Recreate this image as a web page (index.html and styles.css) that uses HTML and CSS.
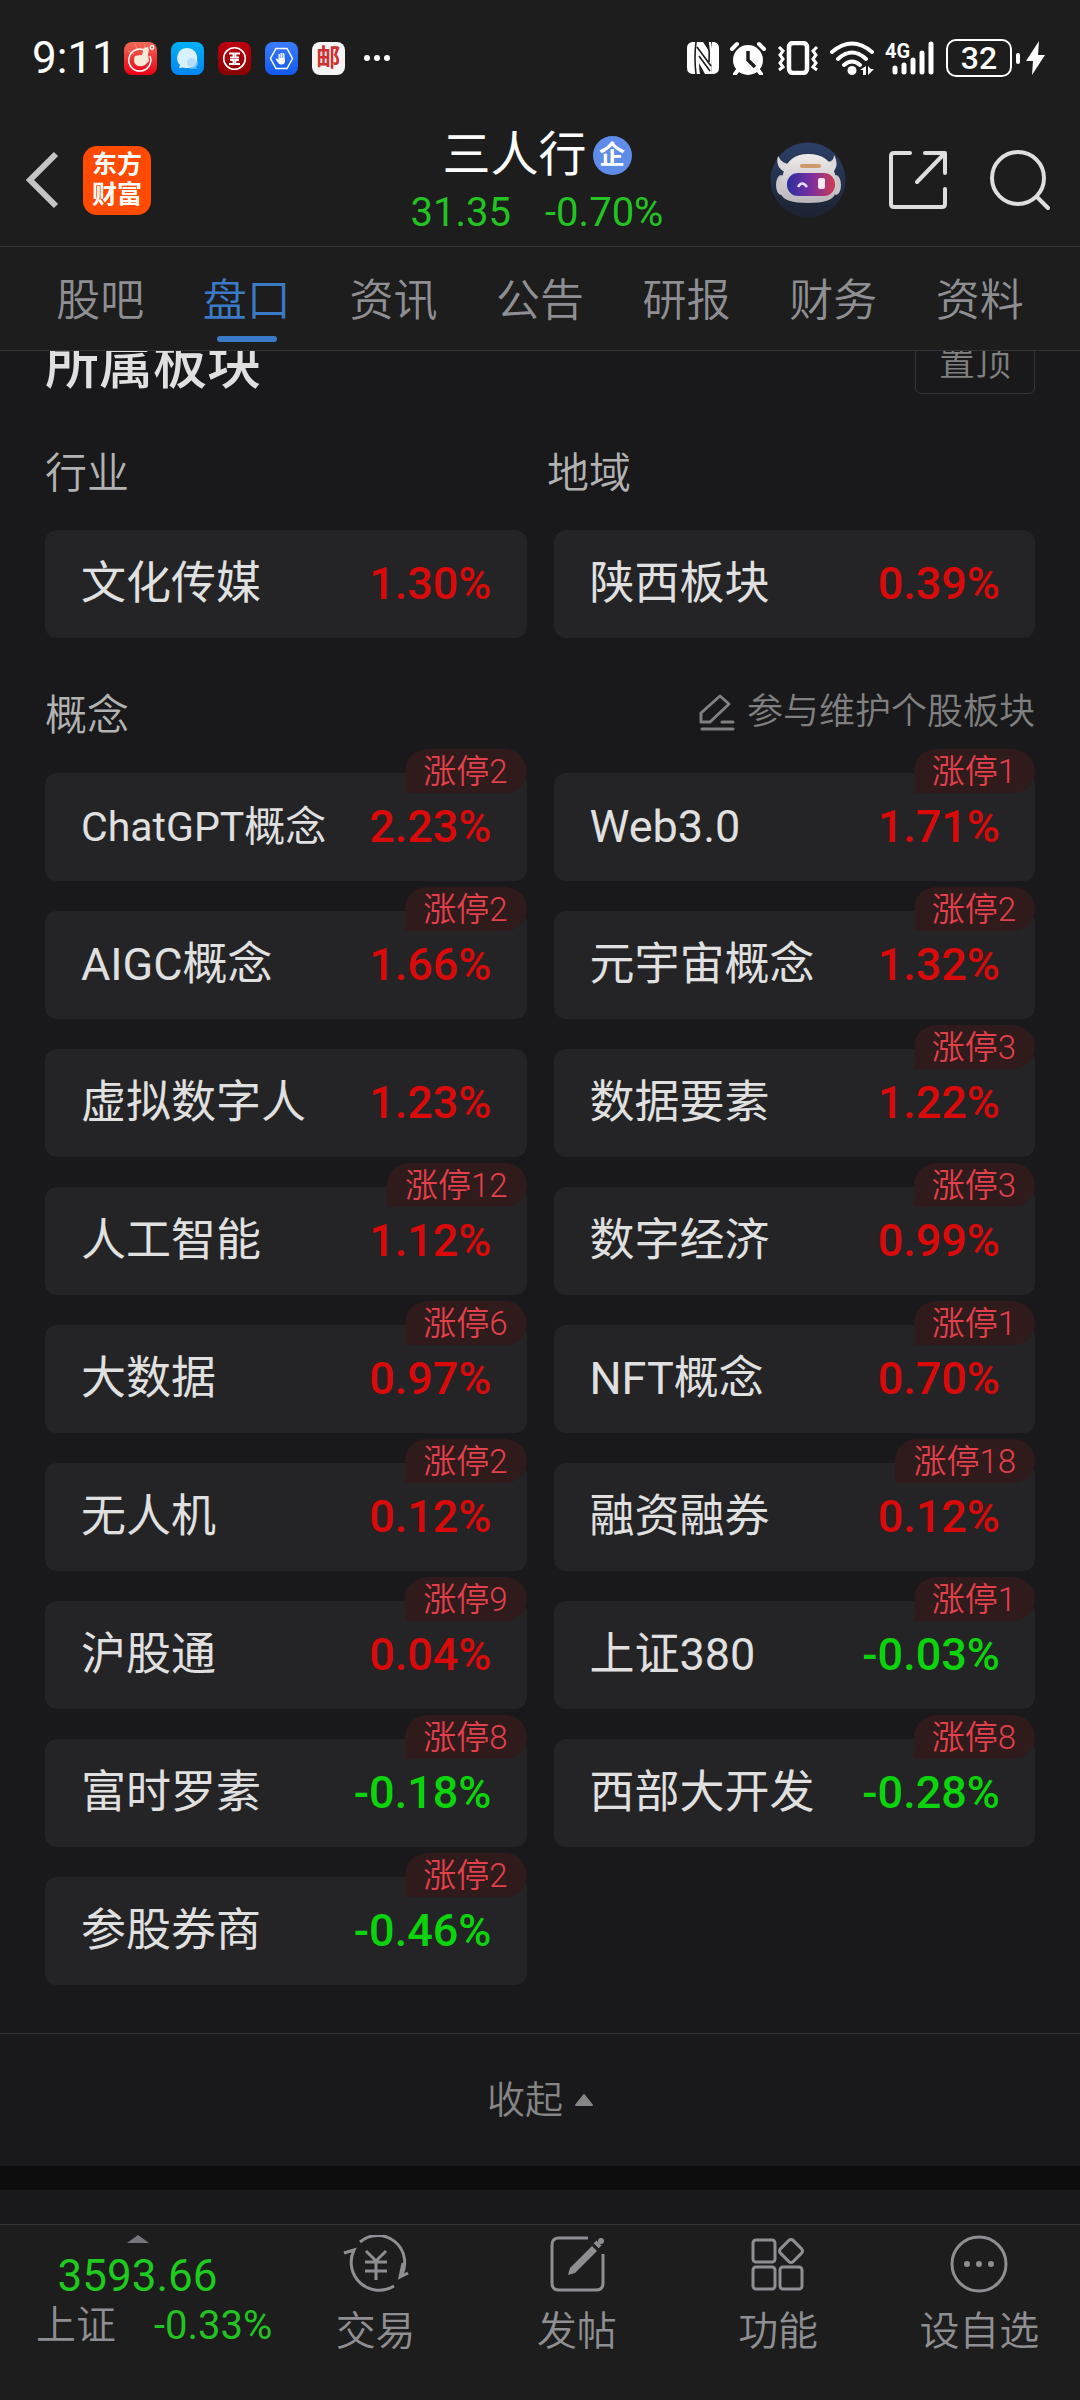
FILE: index.html
```html
<!DOCTYPE html>
<html lang="zh-CN">
<head>
<meta charset="utf-8">
<meta name="viewport" content="width=device-width, initial-scale=1">
<title>三人行 31.35 -0.70%</title>
<link rel="stylesheet" href="styles.css">
</head>
<body>
<div class="status">
  <div class="status-left">
    <span class="clock">9:11</span>
    <svg class="app" viewBox="0 0 33 33"><defs><linearGradient id="g1" x1="0" y1="0" x2="0" y2="1"><stop offset="0" stop-color="#ee6a58"/><stop offset="1" stop-color="#ee0014"/></linearGradient></defs><rect width="33" height="33" rx="8" fill="url(#g1)"/><path d="M4 9l6 3M11 2l2 5M21 2l-1 5" stroke="#f58e7c"/><path d="M22 9A11 11 0 1 0 26 14" fill="none" stroke="#fff" stroke-width="1.5"/><path d="M20 6l4-1 1 3-1 4 1 7-4 4q-6 3-10-1-2-4 0-8 4-1 7-1 1-4 2-7z" fill="#f6ead8"/><circle cx="28" cy="5.500" r="1.800" fill="none" stroke="#fff" stroke-width="1.300"/></svg>
    <svg class="app" viewBox="0 0 33 33"><defs><linearGradient id="g2" x1="0" y1="0" x2="0" y2="1"><stop offset="0" stop-color="#00b0f6"/><stop offset="1" stop-color="#0584f2"/></linearGradient></defs><rect width="33" height="33" rx="8" fill="url(#g2)"/><circle cx="21" cy="21" r="6" fill="#6cc0fb"/><path d="M24 25l3 2-5-1z" fill="#6cc0fb"/><path d="M15.500 6a10.500 10 0 1 1-3 19.500L8 26l1-3A10 10 0 0 1 15.500 6z" fill="#d8f0fd"/><circle cx="20.500" cy="20.500" r="4.500" fill="#b4ddfa"/></svg>
    <svg class="app" viewBox="0 0 33 33"><defs><linearGradient id="g3" x1="0" y1="0" x2="0" y2="1"><stop offset="0" stop-color="#c00010"/><stop offset="1" stop-color="#8a0000"/></linearGradient></defs><rect width="33" height="33" rx="8" fill="url(#g3)"/><g fill="none" stroke="#fff"><circle cx="16.500" cy="16.500" r="10.800" stroke-width="1.600"/><path d="M11 11.500h4.500v4H12M22 11.500h-4.500v4H21M11 22h4.500v-4H12M22 22h-4.500v-4H21" stroke-width="1.800"/></g></svg>
    <svg class="app" viewBox="0 0 33 33"><defs><linearGradient id="g4" x1="0" y1="0" x2="0" y2="1"><stop offset="0" stop-color="#3b7cfa"/><stop offset="1" stop-color="#1259ee"/></linearGradient></defs><rect width="33" height="33" rx="8" fill="url(#g4)"/><path d="M11 6.500h11L27.500 16.500 22 26.500H11L5.500 16.500z" fill="none" stroke="#fff" stroke-width="1.500"/><path d="M12.500 20l-2-3 1.500-.500 1.500 1.500v-6h1.300v4h.700v-5h1.400v5h.600v-5h1.400v5.500h.600V12H20v8q-1 3-4 2.500-2 0-3.500-2.500z" fill="#fff"/></svg>
    <span class="app app-mail">邮</span>
    <svg class="more" viewBox="0 0 28 8" fill="#fff"><circle cx="4" cy="4" r="3"/><circle cx="14" cy="4" r="3"/><circle cx="24" cy="4" r="3"/></svg>
  </div>
  <div class="status-right">
    <svg width="32" height="34" viewBox="0 0 32 34"><path d="M7 1H5Q0 2 0 7v20q0 6 7 6zM25 1h2q5 1 5 6v20q0 6-7 6h-1q1-8 0-16T25 1z" fill="#fff"/><path d="M7 1h9l6 9q0-5-1-9h3q1.500 16 0 32h-6L12 22q0 6 1 11H7z" fill="#fff"/><path d="M10 6l14 19M12 15l11 15M9 1q-2 16 0 32M21 1q2 10 1 20" stroke="#1d1d1d" stroke-width="1.600" fill="none"/></svg>
    <svg width="36" height="34" viewBox="0 0 36 34"><circle cx="18" cy="19" r="15" fill="#fff"/><path d="M2 8l5-5M34 8l-5-5M8 29l-3 4M28 29l3 4" stroke="#fff" stroke-width="4" stroke-linecap="round"/><path d="M18 10v9l7 7" stroke="#1d1d1d" stroke-width="3.500" fill="none"/></svg>
    <svg width="42" height="34" viewBox="0 0 42 34" fill="none" stroke="#fff"><rect x="12" y="2" width="18" height="30" rx="4" stroke-width="4.500"/><path d="M2 6l4 4-3 4 3 4-3 4 3 4-4 3M40 6l-4 4 3 4-3 4 3 4-3 4 4 3" stroke-width="3"/></svg>
    <svg width="44" height="34" viewBox="0 0 44 34"><g fill="none" stroke="#fff" stroke-width="4" stroke-linecap="round"><path d="M2 11Q22-6 42 11M8 18Q22 5 36 18M14 24Q22 17 30 24"/></g><circle cx="22" cy="29.500" r="4.500" fill="#fff"/><path d="M36 25v9h-3v-5h-3zM38 25v9l6-6h-3z" fill="#fff"/></svg>
    <svg class="signal" width="50" height="34" viewBox="0 0 50 34"><path d="M10 27v4M19 24v7M28 19v12M37 12v19M46 3v28" stroke="#fff" stroke-width="5" stroke-linecap="round"/><text x="0" y="17" class="net">4G</text></svg>
    <span class="battery">32</span>
    <svg width="30" height="34" viewBox="0 0 30 34" fill="#fff"><rect x="0" y="12" width="4" height="11" rx="2"/><path d="M23 0L10 20h7l-1 14L29 14h-7z"/></svg>
  </div>
</div>

<header class="bar">
  <div class="bar-left">
    <button class="icon-btn" aria-label="返回"><svg width="36" height="60" viewBox="0 0 36 60" fill="none" stroke="#c4c4c4" stroke-width="6"><path d="M32 4L6 30l26 26"/></svg></button>
    <a class="brand" href="#">东方<br>财富</a>
  </div>
  <div class="stock">
    <h1 class="name">三人行<span class="ent">企</span></h1>
    <p class="quote"><span>31.35</span><span>-0.70%</span></p>
  </div>
  <div class="bar-right">
    <button class="icon-btn" aria-label="智能助手"><svg width="76" height="76" viewBox="0 0 76 76"><defs><linearGradient id="r1" x1="0" y1="0" x2="0" y2="1"><stop offset="0" stop-color="#2c4068"/><stop offset="1" stop-color="#1c212e"/></linearGradient><linearGradient id="r2"><stop offset="0" stop-color="#2b2fa0"/><stop offset=".5" stop-color="#7a2fa0"/><stop offset="1" stop-color="#cf3b50"/></linearGradient><linearGradient id="r3" x1="0" y1="0" x2="0" y2="1"><stop offset="0" stop-color="#efebea"/><stop offset="1" stop-color="#b9b5bb"/></linearGradient></defs><circle cx="38" cy="38" r="37.500" fill="url(#r1)"/><path d="M15 30Q5 25 8 14q4 8 12 8zM58 20q6-1 6-7 6 11-2 18z" fill="#dcd9dc"/><ellipse cx="11" cy="43" rx="5" ry="10" fill="#c8c5cb"/><ellipse cx="66" cy="43" rx="5" ry="10" fill="#c8c5cb"/><path d="M38 12q22 0 27 20 3 12 0 20-3 9-27 9t-27-9q-3-8 2-20 5-20 25-20z" fill="url(#r3)"/><rect x="30" y="22" width="21" height="4" rx="2" fill="#cf9a6a"/><rect x="17" y="31" width="48" height="23" rx="11" fill="url(#r2)"/><path d="M28 45q4-7 9 0" fill="none" stroke="#e6dcff" stroke-width="2.500"/><rect x="48" y="36" width="7" height="11" rx="2" fill="#fbe9f2"/></svg></button>
    <button class="icon-btn" aria-label="分享"><svg width="60" height="60" viewBox="0 0 60 60" fill="none" stroke="#dedede" stroke-width="4" stroke-linecap="round" stroke-linejoin="round"><path d="M22 3H6Q3 3 3 6v48q0 3 3 3h48q3 0 3-3V39M37 3h20v20M56 4L29 32"/></svg></button>
    <button class="icon-btn" aria-label="搜索"><svg width="60" height="60" viewBox="0 0 60 60" fill="none" stroke="#dedede" stroke-width="4" stroke-linecap="round"><circle cx="28" cy="28" r="26"/><path d="M47 47l11 11"/></svg></button>
  </div>
</header>

<nav class="tabs">
  <a href="#">股吧</a>
  <a href="#" class="on" aria-current="page">盘口</a>
  <a href="#">资讯</a>
  <a href="#">公告</a>
  <a href="#">研报</a>
  <a href="#">财务</a>
  <a href="#">资料</a>
</nav>

<main class="content">
  <div class="section-head">
    <h2>所属板块</h2>
    <button class="pin">置顶</button>
  </div>
  <div class="labels"><h3>行业</h3><h3>地域</h3></div>
  <div class="grid">
    <a class="card" href="#">文化传媒<b class="up">1.30%</b></a>
    <a class="card" href="#">陕西板块<b class="up">0.39%</b></a>
  </div>
  <div class="concept-head">
    <h3>概念</h3>
    <a class="edit" href="#"><svg width="36" height="38" viewBox="0 0 36 38" fill="none" stroke="#808080" stroke-width="3" stroke-linecap="round" stroke-linejoin="round"><path d="M3 36h31M23 29h11M2 29v-9L21 3l9 8L11 29z"/></svg>参与维护个股板块</a>
  </div>
  <div class="grid">
    <a class="card" href="#"><span class="small">ChatGPT概念</span><b class="up">2.23%</b><i>涨停2</i></a>
    <a class="card" href="#">Web3.0<b class="up">1.71%</b><i>涨停1</i></a>
    <a class="card" href="#">AIGC概念<b class="up">1.66%</b><i>涨停2</i></a>
    <a class="card" href="#">元宇宙概念<b class="up">1.32%</b><i>涨停2</i></a>
    <a class="card" href="#">虚拟数字人<b class="up">1.23%</b></a>
    <a class="card" href="#">数据要素<b class="up">1.22%</b><i>涨停3</i></a>
    <a class="card" href="#">人工智能<b class="up">1.12%</b><i>涨停12</i></a>
    <a class="card" href="#">数字经济<b class="up">0.99%</b><i>涨停3</i></a>
    <a class="card" href="#">大数据<b class="up">0.97%</b><i>涨停6</i></a>
    <a class="card" href="#">NFT概念<b class="up">0.70%</b><i>涨停1</i></a>
    <a class="card" href="#">无人机<b class="up">0.12%</b><i>涨停2</i></a>
    <a class="card" href="#">融资融券<b class="up">0.12%</b><i>涨停18</i></a>
    <a class="card" href="#">沪股通<b class="up">0.04%</b><i>涨停9</i></a>
    <a class="card" href="#">上证380<b class="down">-0.03%</b><i>涨停1</i></a>
    <a class="card" href="#">富时罗素<b class="down">-0.18%</b><i>涨停8</i></a>
    <a class="card" href="#">西部大开发<b class="down">-0.28%</b><i>涨停8</i></a>
    <a class="card" href="#">参股券商<b class="down">-0.46%</b><i>涨停2</i></a>
  </div>
</main>
<button class="fold">收起<svg width="18" height="12" viewBox="0 0 18 12"><path d="M9 1l8 10H1z" fill="#868686" stroke="#868686" stroke-width="2" stroke-linejoin="round"/></svg></button>
<div class="band"></div>

<footer class="dock">
  <a class="index" href="#">
    <svg width="22" height="8" viewBox="0 0 22 8"><path d="M11 0l11 8H0z" fill="#77777b"/></svg>
    <span class="points">3593.66</span>
    <span class="index-row"><span>上证</span><span class="chg">-0.33%</span></span>
  </a>
  <a class="item" href="#"><svg width="66" height="58" viewBox="0 0 66 58" fill="none" stroke="#8f8f93" stroke-width="3"><path d="M17 7A27 27 0 0 1 58 41M1 18l10-3A28 28 0 0 0 51 51M65 38l-8 4 3-14"/><path d="M23 16l10 10 10-10M33 26v19M22 27h22M22 36h22"/></svg>交易</a>
  <a class="item" href="#"><svg width="56" height="58" viewBox="0 0 56 58" fill="none" stroke="#8f8f93" stroke-width="3"><path d="M39 3H10Q3 3 3 10v38q0 7 7 7h37q7 0 7-7V19"/><path d="M46 12L50 8" stroke-width="7"/><circle cx="52" cy="6" r="3" fill="#8f8f93" stroke="none"/><path d="M43 11l5 5-22 22-7 2 2-7z" fill="#8f8f93" stroke="none"/><path d="M44 9l6 6" stroke="#1d1d1d" stroke-width="2"/></svg>发帖</a>
  <a class="item" href="#"><svg width="56" height="58" viewBox="0 0 56 58" fill="none" stroke="#8f8f93" stroke-width="3"><rect x="3" y="5" width="22" height="22" rx="3"/><rect x="3" y="32" width="22" height="22" rx="3"/><rect x="30" y="32" width="22" height="22" rx="3"/><rect x="32" y="7" width="18" height="18" rx="3" transform="rotate(45 41 16)"/></svg>功能</a>
  <a class="item" href="#"><svg width="58" height="58" viewBox="0 0 58 58" fill="none" stroke="#8f8f93" stroke-width="3"><circle cx="29" cy="29" r="27"/><g fill="#8f8f93" stroke="none"><circle cx="17" cy="29" r="3"/><circle cx="29" cy="29" r="3"/><circle cx="41" cy="29" r="3"/></g></svg>设自选</a>
</footer>
</body>
</html>
```
FILE: styles.css
```css
* { box-sizing: border-box; }

body {
  margin: 0;
  min-height: 100vh;
  display: flex;
  flex-direction: column;
  background: #19191b;
  color: #e0e0e0;
  font-family: Roboto, "Noto Sans CJK SC", sans-serif;
}

h1, h2, h3, p { margin: 0; font-weight: 400; }
a { color: inherit; text-decoration: none; }
button { border: 0; padding: 0; background: none; color: inherit; font: inherit; }
svg { display: block; flex: none; }

/* status bar */
.status {
  display: flex;
  justify-content: space-between;
  align-items: center;
  height: 116px;
  padding: 0 34px 0 32px;
  background: #1d1d1d;
  color: #fff;
}
.status-left { display: flex; align-items: center; gap: 14px; }
.clock { font-size: 44px; line-height: 48px; margin-right: -7px; }
.app { width: 33px; height: 33px; }
.app-mail {
  border-radius: 8px;
  background: #f4f4f4;
  color: #d03030;
  font-size: 24px;
  font-weight: 700;
  line-height: 32px;
  text-align: center;
}
.more { width: 28px; height: 8px; margin-left: 4px; }
.status-right { display: flex; align-items: center; gap: 11px; }
.signal { overflow: visible; }
.net { fill: #fff; font-size: 20px; font-weight: 700; }
.battery {
  width: 66px;
  height: 38px;
  border: 2px solid #fff;
  border-radius: 10px;
  font-size: 32px;
  font-weight: 500;
  line-height: 35px;
  text-align: center;
  margin-right: -7px;
}

/* stock header */
.bar {
  display: grid;
  grid-template-columns: 1fr auto 1fr;
  align-items: center;
  height: 131px;
  padding: 0 30px 2px 24px;
  background: #1d1d1d;
  border-bottom: 1px solid #343436;
}
.bar-left { display: flex; align-items: center; gap: 23px; }
.brand {
  width: 68px;
  height: 69px;
  padding-top: 4px;
  border-radius: 14px;
  background: #ff4a00;
  color: #fff;
  font-size: 25px;
  font-weight: 700;
  line-height: 30px;
  text-align: center;
}
.stock { text-align: center; padding-top: 6px; }
.name {
  display: flex;
  justify-content: center;
  align-items: center;
  gap: 6px;
  color: #fff;
  font-size: 48px;
  line-height: 60px;
}
.ent {
  width: 39px;
  height: 39px;
  border-radius: 50%;
  background: #5f8ce8;
  font-size: 26px;
  font-weight: 700;
  line-height: 38px;
}
.quote {
  display: flex;
  justify-content: center;
  gap: 34px;
  color: #22c322;
  font-size: 40px;
  line-height: 56px;
}
.bar-right { display: flex; justify-content: flex-end; align-items: center; gap: 42px; }

/* tabs */
.tabs {
  display: flex;
  height: 104px;
  padding: 0 27px;
  background: #1d1d1d;
  border-bottom: 1px solid #343436;
}
.tabs a {
  flex: 1;
  display: flex;
  flex-direction: column;
  align-items: center;
  padding-top: 24px;
  color: #8f8f93;
  font-size: 44px;
  font-weight: 350;
  line-height: 60px;
}
.tabs .on { color: #3b7ac6; }
.tabs .on::after {
  content: "";
  width: 60px;
  height: 6px;
  margin-top: 5px;
  border-radius: 3px;
  background: #3b7ac6;
}

/* scrolled content */
.content { overflow: hidden; padding: 0 45px 48px; }
.section-head {
  display: flex;
  justify-content: space-between;
  align-items: center;
  height: 60px;
  margin-top: -17px;
}
h2 { font-size: 54px; font-weight: 500; line-height: 60px; padding-top: 4px; }
.pin {
  width: 120px;
  height: 60px;
  border: 1px solid #343436;
  border-radius: 6px;
  color: #808080;
  font-size: 36px;
  font-weight: 350;
  line-height: 58px;
}
h3 { color: #b2b2b2; font-size: 42px; font-weight: 350; line-height: 60px; }
.labels {
  display: grid;
  grid-template-columns: 1fr 1fr;
  gap: 14px;
  margin: 50px 0 26px;
}
.grid { display: grid; grid-template-columns: 1fr 1fr; gap: 30px 27px; }
.card {
  position: relative;
  display: flex;
  justify-content: space-between;
  align-items: center;
  height: 108px;
  padding: 0 35px 0 36px;
  border-radius: 12px;
  background: #242426;
  font-size: 45px;
  line-height: 60px;
}
.small { font-size: 41px; }
.card b { font-weight: 500; }
.up { color: #da0a0a; }
.down { color: #0cd40c; }
.card i {
  position: absolute;
  top: -24px;
  right: 0;
  height: 44px;
  padding: 0 19px 0 18px;
  border-radius: 24px 24px 24px 0;
  background: #2f1a1c;
  color: #e2404a;
  font-size: 33px;
  font-style: normal;
  font-weight: 350;
  line-height: 46px;
}
.concept-head {
  display: flex;
  justify-content: space-between;
  align-items: center;
  margin: 48px 0 27px;
}
.edit {
  display: flex;
  align-items: center;
  gap: 12px;
  color: #808080;
  font-size: 36px;
  font-weight: 350;
  line-height: 52px;
  padding-bottom: 8px;
}

/* collapse row and separator */
.fold {
  display: flex;
  justify-content: center;
  align-items: center;
  gap: 12px;
  height: 133px;
  border-top: 1px solid #343436;
  color: #868686;
  font-size: 38px;
  font-weight: 350;
  line-height: 56px;
}
.band { height: 24px; background: #0d0d0d; }

/* bottom dock */
.dock {
  display: flex;
  height: 176px;
  margin-top: auto;
  padding-top: 10px;
  background: #1d1d1d;
  border-top: 1px solid #343436;
  color: #8f8f93;
  font-size: 40px;
  font-weight: 350;
}
.index { width: 275px; display: flex; flex-direction: column; align-items: center; }
.points { color: #1ecb1e; font-size: 44px; font-weight: 400; line-height: 50px; padding-top: 8px; }
.index-row { display: flex; align-items: center; gap: 38px; padding-left: 36px; width: 275px; line-height: 50px; }
.chg { color: #22c322; font-weight: 400; }
.item { flex: 1; display: flex; flex-direction: column; align-items: center; gap: 11px; line-height: 56px; }
```
